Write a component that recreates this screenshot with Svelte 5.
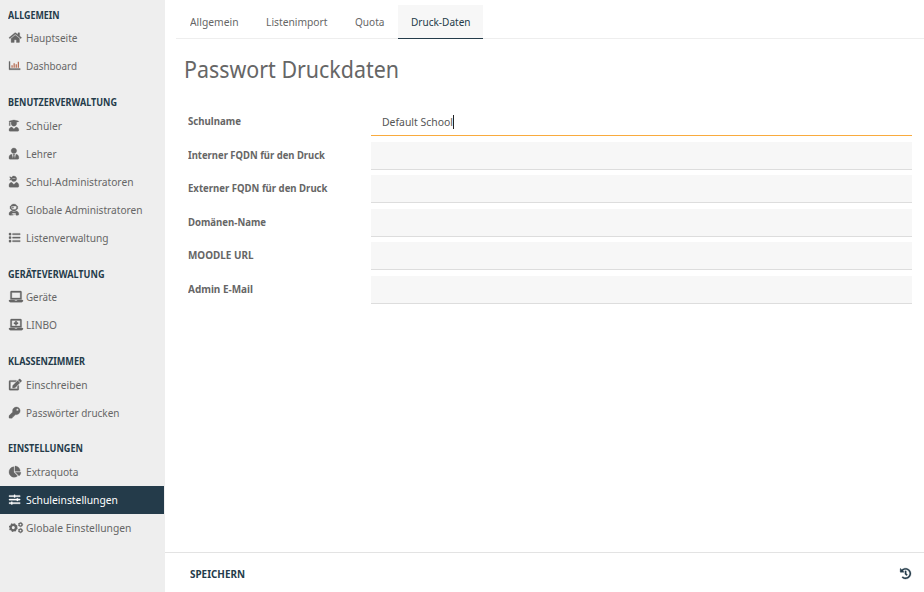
<script>
  const icons = {
    home: { w: 576, d: 'M280.37 148.26L96 300.11V464a16 16 0 0 0 16 16l112.06-.29a16 16 0 0 0 15.92-16V368a16 16 0 0 1 16-16h64a16 16 0 0 1 16 16v95.64a16 16 0 0 0 16 16.05L464 480a16 16 0 0 0 16-16V300L295.67 148.26a12.19 12.19 0 0 0-15.3 0zM571.6 251.47L488 182.56V44.05a12 12 0 0 0-12-12h-56a12 12 0 0 0-12 12v72.61L318.47 43a48 48 0 0 0-61 0L4.34 251.47a12 12 0 0 0-1.6 16.9l25.5 31A12 12 0 0 0 45.15 301l235.22-193.74a12.19 12.19 0 0 1 15.3 0L530.9 301a12 12 0 0 0 16.9-1.6l25.5-31a12 12 0 0 0-1.7-16.93z' },
    chart: { w: 512, d: 'M0 64h48v328h464v56H16a16 16 0 0 1-16-16z', bars: 'M112 240h56v112h-56zM208 144h56v208h-56zM304 192h56v160h-56zM400 80h56v272h-56z' },
    student: { w: 448, d: 'M319.4 320.6L224 416l-95.4-95.4C57.1 323.7 0 382.2 0 454.4v9.6c0 26.5 21.5 48 48 48h352c26.5 0 48-21.5 48-48v-9.6c0-72.2-57.1-130.7-128.6-133.8zM13.6 79.8l6.4 1.5v58.4c-7 4.2-12 11.5-12 20.3 0 8.4 4.6 15.4 11.1 19.7L3.5 242c-1.7 6.9 2.1 14 7.6 14h41.8c5.5 0 9.3-7.1 7.6-14l-15.6-62.3C51.4 175.4 56 168.4 56 160c0-8.8-5-16.1-12-20.3V87.1l66 15.9c-8.6 17.2-14 36.4-14 57 0 70.7 57.3 128 128 128s128-57.3 128-128c0-20.6-5.3-39.8-14-57l96.3-23.2c18.2-4.4 18.2-27.1 0-31.5l-190.4-46c-13-3.1-26.7-3.1-39.7 0L13.6 48.2c-18.1 4.4-18.1 27.2 0 31.6z' },
    tie: { w: 448, d: 'M224 256c70.7 0 128-57.3 128-128S294.7 0 224 0 96 57.3 96 128s57.3 128 128 128zm95.8 32.6L272 480l-32-136 32-56h-96l32 56-32 136-47.8-191.4C56.9 292 0 350.3 0 422.4V464c0 26.5 21.5 48 48 48h352c26.5 0 48-21.5 48-48v-41.6c0-72.1-56.9-130.4-128.2-133.8z' },
    ninja: { w: 448, d: 'M325.4 289.2L224 390.6 122.6 289.2C54 295.3 0 352.2 0 422.4V464c0 26.5 21.5 48 48 48h352c26.5 0 48-21.5 48-48v-41.6c0-70.2-54-127.1-122.6-133.2zM32 192c27.3 0 51.8-11.5 69.2-29.7 15.1 53.9 64 93.7 122.8 93.7 70.7 0 128-57.3 128-128S294.7 0 224 0c-50.4 0-93.6 29.4-114.5 71.8C92.1 47.8 64 32 32 32c0 33.4 17.1 62.8 43.1 80-26 17.2-43.1 46.6-43.1 80zm144-96h96c17.7 0 32 14.3 32 32H144c0-17.7 14.3-32 32-32z' },
    astronaut: { w: 448, d: 'M64 224h13.5c24.7 56.5 80.9 96 146.5 96s121.8-39.5 146.5-96H384c8.8 0 16-7.2 16-16v-96c0-8.8-7.2-16-16-16h-13.5C345.8 39.5 289.6 0 224 0S102.2 39.5 77.5 96H64c-8.8 0-16 7.2-16 16v96c0 8.8 7.2 16 16 16zm40-88c0-22.1 21.5-40 48-40h144c26.5 0 48 17.9 48 40v24c0 53-43 96-96 96h-48c-53 0-96-43-96-96v-24zm72 72l12-36 36-12-36-12-12-36-12 36-36 12 36 12 12 36zm151.6 113.4C297.7 340.7 262.2 352 224 352s-73.7-11.3-103.6-30.6C52.9 328.5 0 385 0 454.4v9.6c0 26.5 21.5 48 48 48h80v-64c0-17.7 14.3-32 32-32h128c17.7 0 32 14.3 32 32v64h80c26.5 0 48-21.5 48-48v-9.6c0-69.4-52.9-125.9-120.4-133zM272 448c-8.8 0-16 7.2-16 16s7.2 16 16 16 16-7.2 16-16-7.2-16-16-16zm-96 0c-8.8 0-16 7.2-16 16v48h32v-48c0-8.8-7.2-16-16-16z' },
    list: { w: 512, d: 'M80 368H16a16 16 0 0 0-16 16v64a16 16 0 0 0 16 16h64a16 16 0 0 0 16-16v-64a16 16 0 0 0-16-16zm0-320H16A16 16 0 0 0 0 64v64a16 16 0 0 0 16 16h64a16 16 0 0 0 16-16V64a16 16 0 0 0-16-16zm0 160H16a16 16 0 0 0-16 16v64a16 16 0 0 0 16 16h64a16 16 0 0 0 16-16v-64a16 16 0 0 0-16-16zm416 176H176a16 16 0 0 0-16 16v32a16 16 0 0 0 16 16h320a16 16 0 0 0 16-16v-32a16 16 0 0 0-16-16zm0-320H176a16 16 0 0 0-16 16v32a16 16 0 0 0 16 16h320a16 16 0 0 0 16-16V80a16 16 0 0 0-16-16zm0 160H176a16 16 0 0 0-16 16v32a16 16 0 0 0 16 16h320a16 16 0 0 0 16-16v-32a16 16 0 0 0-16-16z' },
    laptop: { w: 640, d: 'M624 416H381.54c-.74 19.81-14.71 32-32.74 32H288c-18.69 0-33.02-17.47-32.77-32H16c-8.8 0-16 7.2-16 16v16c0 35.2 28.8 64 64 64h512c35.2 0 64-28.8 64-64v-16c0-8.8-7.2-16-16-16zM576 48c0-26.4-21.6-48-48-48H112C85.6 0 64 21.6 64 48v336h512V48zm-64 272H128V64h384v256z' },
    medical: { w: 640, d: 'M624 416H381.54c-.74 19.81-14.71 32-32.74 32H288c-18.69 0-33.02-17.47-32.77-32H16c-8.8 0-16 7.2-16 16v16c0 35.2 28.8 64 64 64h512c35.2 0 64-28.8 64-64v-16c0-8.8-7.2-16-16-16zM576 48c0-26.4-21.6-48-48-48H112C85.6 0 64 21.6 64 48v336h512V48zm-64 272H128V64h384v256zM232 224h56v56a8 8 0 0 0 8 8h48a8 8 0 0 0 8-8v-56h56a8 8 0 0 0 8-8v-48a8 8 0 0 0-8-8h-56v-56a8 8 0 0 0-8-8h-48a8 8 0 0 0-8 8v56h-56a8 8 0 0 0-8 8v48a8 8 0 0 0 8 8z' },
    edit: { w: 576, d: 'M402.6 83.2l90.2 90.2c3.8 3.8 3.8 10 0 13.8L274.4 405.6l-92.8 10.3c-12.4 1.4-22.9-9.1-21.5-21.5l10.3-92.8L388.8 83.2c3.8-3.8 10-3.8 13.8 0zm162-22.9l-48.8-48.8c-15.2-15.2-39.9-15.2-55.2 0l-35.4 35.4c-3.8 3.8-3.8 10 0 13.8l90.2 90.2c3.8 3.8 10 3.8 13.8 0l35.4-35.4c15.2-15.3 15.2-40 0-55.2zM384 346.2V448H64V128h229.8c3.2 0 6.2-1.3 8.5-3.5l40-40c7.6-7.6 2.2-20.5-8.5-20.5H48C21.5 64 0 85.5 0 112v352c0 26.5 21.5 48 48 48h352c26.5 0 48-21.5 48-48V306.2c0-10.7-12.9-16-20.5-8.5l-40 40c-2.2 2.3-3.5 5.3-3.5 8.5z' },
    key: { w: 512, d: 'M512 176.001C512 273.203 433.202 352 336 352c-11.22 0-22.19-1.062-32.827-3.069l-24.012 27.014A23.999 23.999 0 0 1 261.223 384H224v40c0 13.255-10.745 24-24 24h-40v40c0 13.255-10.745 24-24 24H24c-13.255 0-24-10.745-24-24v-78.059c0-6.365 2.529-12.47 7.029-16.971l161.802-161.802C163.108 213.814 160 195.271 160 176 160 78.798 238.797.001 335.999 0 433.488-.001 512 78.511 512 176.001zM336 128c0 26.51 21.49 48 48 48s48-21.49 48-48-21.49-48-48-48-48 21.49-48 48z' },
    pie: { w: 544, d: 'M527.79 288H290.5l158.03 158.03c6.04 6.04 15.98 6.53 22.19.68 38.7-36.46 65.32-85.61 73.13-140.86 1.34-9.46-6.51-17.85-16.06-17.85zm-15.83-64.8C503.72 103.74 408.26 8.28 288.8.04 279.68-.59 272 7.1 272 16.24V240h223.77c9.14 0 16.82-7.68 16.19-16.8zM224 288V50.71c0-9.55-8.39-17.4-17.84-16.06C86.99 51.49-4.1 155.6.14 280.37 4.5 408.51 114.83 513.59 243.03 511.98c50.4-.63 96.97-16.87 135.26-44.03 7.9-5.6 8.42-17.23 1.57-24.08L224 288z' },
    sliders: { w: 512, d: 'M496 384H160v-16c0-8.8-7.2-16-16-16h-32c-8.8 0-16 7.2-16 16v16H16c-8.8 0-16 7.2-16 16v32c0 8.8 7.2 16 16 16h80v16c0 8.8 7.2 16 16 16h32c8.8 0 16-7.2 16-16v-16h336c8.8 0 16-7.2 16-16v-32c0-8.8-7.2-16-16-16zm0-160h-80v-16c0-8.8-7.2-16-16-16h-32c-8.8 0-16 7.2-16 16v16H16c-8.8 0-16 7.2-16 16v32c0 8.8 7.2 16 16 16h336v16c0 8.8 7.2 16 16 16h32c8.8 0 16-7.2 16-16v-16h80c8.8 0 16-7.2 16-16v-32c0-8.8-7.2-16-16-16zm0-160H288V48c0-8.8-7.2-16-16-16h-32c-8.8 0-16 7.2-16 16v16H16C7.2 64 0 71.2 0 80v32c0 8.8 7.2 16 16 16h208v16c0 8.8 7.2 16 16 16h32c8.8 0 16-7.2 16-16v-16h208c8.8 0 16-7.2 16-16V80c0-8.8-7.2-16-16-16z' },
    history: { w: 512, d: 'M504 255.531c.253 136.64-111.18 248.372-247.82 248.468-59.015.042-113.223-20.53-155.822-54.911-11.077-8.94-11.905-25.541-1.839-35.607l11.267-11.267c8.609-8.609 22.353-9.551 31.891-1.984C173.062 425.135 212.781 440 256 440c101.705 0 184-82.311 184-184 0-101.705-82.311-184-184-184-48.814 0-93.149 18.969-126.068 49.932l50.754 50.754c10.08 10.08 2.941 27.314-11.313 27.314H24c-8.837 0-16-7.163-16-16V38.627c0-14.254 17.234-21.393 27.314-11.314l49.372 49.372C129.209 34.136 189.552 8 256 8c136.81 0 247.747 110.78 248 247.531zm-180.912 78.784l9.823-12.63c8.138-10.463 6.253-25.542-4.21-33.679L288 256.349V152c0-13.255-10.745-24-24-24h-16c-13.255 0-24 10.745-24 24v135.651l65.409 50.874c10.463 8.137 25.541 6.253 33.679-4.21z' },
    cogs: { w: 640, gears: [[196, 256, 122, 8], [526, 118, 70, 6], [526, 394, 70, 6]] },
  };

  const sections = [
    { title: 'ALLGEMEIN', w: 51.5, items: [['home', 'Hauptseite', 51.5], ['chart', 'Dashboard', 51]] },
    { title: 'BENUTZERVERWALTUNG', w: 109, items: [['student', 'Schüler', 36], ['tie', 'Lehrer', 30.5], ['ninja', 'Schul-Administratoren', 107.5], ['astronaut', 'Globale Administratoren', 116.5], ['list', 'Listenverwaltung', 82.5]] },
    { title: 'GERÄTEVERWALTUNG', w: 96.5, items: [['laptop', 'Geräte', 31], ['medical', 'LINBO', 31]] },
    { title: 'KLASSENZIMMER', w: 77, items: [['edit', 'Einschreiben', 61.5], ['key', 'Passwörter drucken', 93.5]] },
    { title: 'EINSTELLUNGEN', w: 75, items: [['pie', 'Extraquota', 52.5], ['sliders', 'Schuleinstellungen', 92], ['cogs', 'Globale Einstellungen', 105.5]] },
  ];

  const tabs = [
    { label: 'Allgemein', w: 48.5 },
    { label: 'Listenimport', w: 61.5 },
    { label: 'Quota', w: 29.5 },
    { label: 'Druck-Daten', w: 59.5 },
  ];

  const fields = [
    { label: 'Schulname', w: 53, value: 'Default School' },
    { label: 'Interner FQDN für den Druck', w: 137, value: '' },
    { label: 'Externer FQDN für den Druck', w: 139.5, value: '' },
    { label: 'Domänen-Name', w: 78, value: '' },
    { label: 'MOODLE URL', w: 65.5, value: '' },
    { label: 'Admin E-Mail', w: 65, value: '' },
  ];

  // Condenses a label so that it sets to the given measure.
  function fit(node, width) {
    node.style.display = 'inline-block';
    const natural = node.getBoundingClientRect().width;
    node.style.width = `${width}px`;
    node.style.transformOrigin = '0 50%';
    node.style.transform = `scaleX(${width / natural})`;
  }
</script>

{#snippet icon(name)}
  {@const i = icons[name]}
  <svg class="icon" viewBox="0 0 {i.w} 512" style:width="{i.w / 512}em" aria-hidden="true">
    {#if i.gears}
      {#each i.gears as [x, y, r, teeth]}
        {@const step = (r * 1.4 * 2 * Math.PI) / teeth}
        <circle cx={x} cy={y} {r} fill="none" stroke="currentColor" stroke-width={r * 0.85} />
        <circle cx={x} cy={y} r={r * 1.4} fill="none" stroke="currentColor" stroke-width={r * 0.5} stroke-dasharray="{step * 0.5} {step * 0.5}" />
      {/each}
    {:else}
      <path class="glyph" d={i.d} />
      {#if i.bars}<path d={i.bars} fill="#b56a50" />{/if}
    {/if}
  </svg>
{/snippet}

<div class="app">
  <aside>
    {#each sections as section}
      <section>
        <h2><span use:fit={section.w}>{section.title}</span></h2>
        {#each section.items as [name, label, w]}
          <a class:active={label === 'Schuleinstellungen'}><b class="slot">{@render icon(name)}</b><span use:fit={w}>{label}</span></a>
        {/each}
      </section>
    {/each}
  </aside>
  <main>
    <nav>
      {#each tabs as tab, n}
        <div class="tab" class:active={n === 3}><span use:fit={tab.w}>{tab.label}</span></div>
      {/each}
    </nav>
    <h1><span use:fit={215}>Passwort Druckdaten</span></h1>
    <form>
      {#each fields as field, n}
        <div class="row">
          <div class="name"><span use:fit={field.w}>{field.label}</span></div>
          <div class="field" class:focused={n === 0}>
            {#if field.value}<span use:fit={71}>{field.value}</span><i class="caret"></i>{/if}
          </div>
        </div>
      {/each}
    </form>
    <footer>
      <strong><span use:fit={55}>SPEICHERN</span></strong>
      {@render icon('history')}
    </footer>
  </main>
</div>

<style>
  .app {
    display: flex;
    height: 592px;
    overflow: hidden;
    background: #fff;
    color: #666;
    font: 11.2px/16px "Noto Sans", "Open Sans", sans-serif;
  }
  span { white-space: nowrap; }
  .icon { height: 1em; flex: none; display: block; overflow: visible; }
  .glyph { fill: currentColor; stroke: currentColor; stroke-width: 14; }
  aside {
    width: 165px;
    flex: none;
    background: #eee;
  }
  section { margin-bottom: 8px; }
  section:nth-child(4) { margin-bottom: 9px; }
  h2 {
    margin: 0;
    box-sizing: border-box;
    height: 24px;
    padding: 7px 0 0 8.2px;
    font-size: 10px;
    line-height: 16px;
    font-weight: 700;
    color: #243b4a;
  }
  section:nth-child(2) h2 { padding-top: 6px; }
  section:nth-child(3) h2 { padding-top: 6px; height: 23px; }
  section:nth-child(4) h2 { padding-top: 6px; height: 24px; }
  section:nth-child(5) h2 { padding-top: 4px; height: 22px; }
  aside a {
    display: flex;
    align-items: center;
    width: 164px;
    height: 28px;
    box-sizing: border-box;
    padding-left: 8.5px;
  }
  .slot { width: 17.2px; flex: none; }
  aside a.active { background: #243b4a; color: #fff; }
  main {
    flex: 1;
    min-width: 0;
    display: flex;
    flex-direction: column;
  }
  nav {
    display: flex;
    margin: 5px 0 0 11px;
    height: 33px;
    border-bottom: 1px solid #eee;
  }
  .tab {
    height: 33px;
    padding: 0 14px 0 13.5px;
    line-height: 34px;
    border-bottom: 1px solid transparent;
  }
  .tab.active { padding: 0 12.8px 0 13px; background: #f7f7f7; border-color: #243b4a; color: #243b4a; }
  h1 {
    margin: 15px 0 0 19.2px;
    font-size: 23.5px;
    line-height: 30px;
    font-weight: 400;
  }
  form { padding: 24px 12.5px 0 23.2px; }
  .row { display: flex; height: 33.6px; }
  .name { width: 182.8px; font-size: 11px; font-weight: 700; line-height: 25px; }
  .field {
    flex: 1;
    box-sizing: border-box;
    height: 28px;
    display: flex;
    align-items: center;
    padding-left: 11px;
    background: #f7f7f7;
    border-bottom: 1px solid #ddd;
    color: #555;
  }
  .field.focused { background: #fff; border-color: #f9ab3e; }
  .caret { width: 1px; height: 14px; background: #222; }
  footer {
    margin-top: auto;
    box-sizing: border-box;
    height: 40px;
    border-top: 1px solid #e3e3e3;
    display: flex;
    align-items: center;
    justify-content: space-between;
    padding: 3px 13px 0 25px;
    color: #243b4a;
  }
  footer strong { font-size: 10.5px; }
</style>
